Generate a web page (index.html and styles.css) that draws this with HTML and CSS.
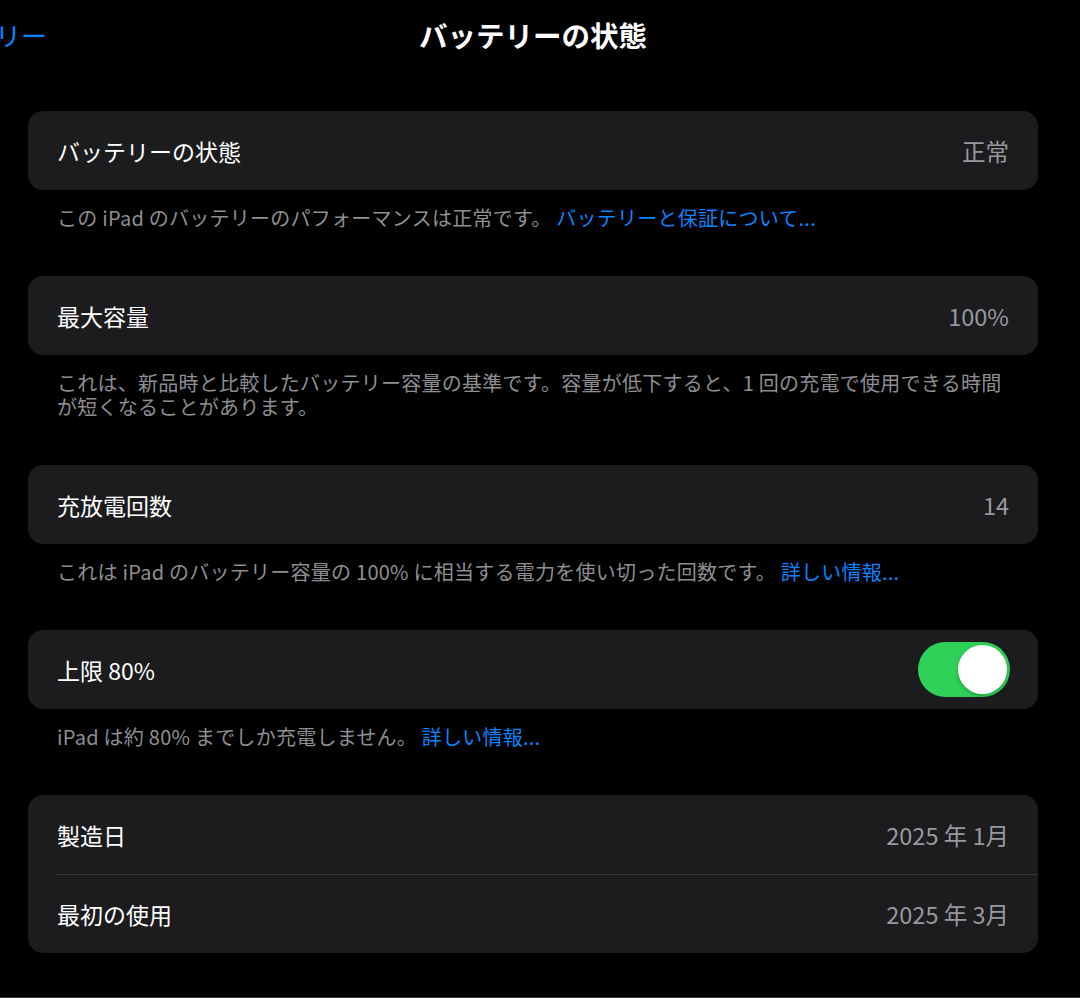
FILE: index.html
```html
<!DOCTYPE html>
<html lang="ja">
<head>
    <meta charset="UTF-8">
    <meta name="viewport" content="width=device-width, initial-scale=1.0">
    <title>バッテリーの状態</title>
    <link rel="stylesheet" href="styles.css">
</head>
<body>

<div class="screen">
    <div class="nav-bar">
        <a class="back-link">バッテリー</a>
        <h1 class="nav-title">バッテリーの状態</h1>
        <span></span>
    </div>

    <div class="settings-list">
        <div class="group">
            <div class="row">
                <span class="row-label">バッテリーの状態</span>
                <span class="row-value">正常</span>
            </div>
        </div>
        <p class="group-footer">この iPad のバッテリーのパフォーマンスは正常です。 <a class="link">バッテリーと保証について...</a></p>

        <div class="group">
            <div class="row">
                <span class="row-label">最大容量</span>
                <span class="row-value">100%</span>
            </div>
        </div>
        <p class="group-footer">これは、新品時と比較したバッテリー容量の基準です。容量が低下すると、1 回の充電で使用できる時間が短くなることがあります。</p>

        <div class="group">
            <div class="row">
                <span class="row-label">充放電回数</span>
                <span class="row-value">14</span>
            </div>
        </div>
        <p class="group-footer">これは iPad のバッテリー容量の 100% に相当する電力を使い切った回数です。 <a class="link">詳しい情報...</a></p>

        <div class="group">
            <div class="row">
                <span class="row-label">上限 80%</span>
                <span class="toggle on"><span class="knob"></span></span>
            </div>
        </div>
        <p class="group-footer">iPad は約 80% までしか充電しません。 <a class="link">詳しい情報...</a></p>

        <div class="group">
            <div class="row">
                <span class="row-label">製造日</span>
                <span class="row-value">2025 年 1月</span>
            </div>
            <div class="row">
                <span class="row-label">最初の使用</span>
                <span class="row-value">2025 年 3月</span>
            </div>
        </div>
    </div>
</div>

</body>
</html>
```

FILE: styles.css
```css
body {
    margin: 0;
    background-color: #000000;
    color: #ffffff;
    font-family: 'Noto Sans CJK JP', 'Noto Sans', sans-serif;
}

.screen {
    height: 998px;
    box-sizing: border-box;
    border-bottom: 1px solid #3a3a3c;
    overflow: hidden;
}

/* Barra de navegação */
.nav-bar {
    display: grid;
    grid-template-columns: 1fr auto 1fr;
    align-items: center;
    height: 68px;
    padding-right: 14px;
}

.back-link {
    justify-self: start;
    margin-left: -83px;
    color: #0a84ff;
    font-size: 26px;
    white-space: nowrap;
}

.nav-title {
    margin: 0;
    font-size: 28.5px;
    font-weight: bold;
}

.settings-list {
    padding: 43px 42px 0 28px;
}

.group {
    background-color: #1c1c1e;
    border-radius: 15px;
    overflow: hidden;
}

.row {
    display: flex;
    justify-content: space-between;
    align-items: center;
    height: 79px;
    padding: 0 29px;
    font-size: 23px;
}

.group .row + .row {
    height: 78px;
    border-top: 1px solid #38383a;
    margin-left: 29px;
    padding-left: 0;
}

.row-value {
    color: #98989e;
    font-size: 23.5px;
}

.group-footer {
    margin: 0 0 46px;
    padding: 16px 29px 0;
    font-size: 20px;
    line-height: 24px;
    letter-spacing: 0.25px;
    color: #8e8e93;
}

.link {
    color: #0a84ff;
}

/* Interruptor */
.toggle {
    display: flex;
    align-items: center;
    width: 92px;
    height: 55px;
    border-radius: 28px;
    background-color: #39393d;
    padding: 0 3px;
    box-sizing: border-box;
    margin-right: -1px;
}

.toggle.on {
    background-color: #30d158;
    justify-content: flex-end;
}

.knob {
    width: 49px;
    height: 49px;
    border-radius: 50%;
    background-color: #ffffff;
    box-shadow: 0 2px 4px rgba(0, 0, 0, 0.25);
}
```
